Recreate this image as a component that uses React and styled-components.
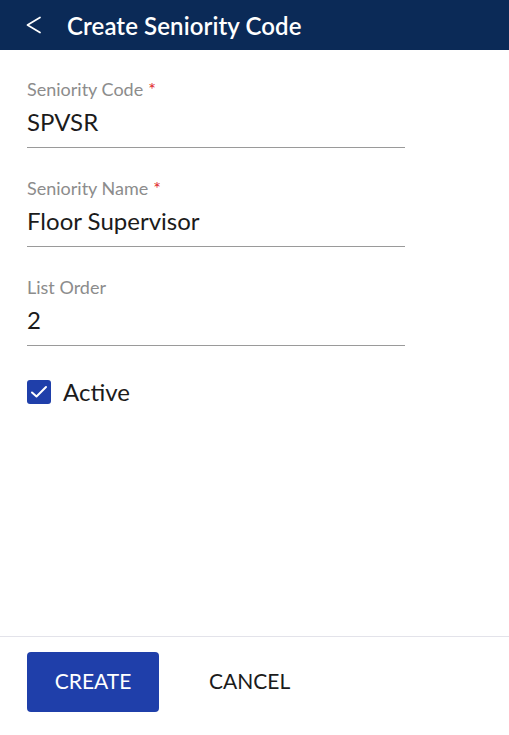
import styled, { createGlobalStyle } from "styled-components";

const GlobalStyle = createGlobalStyle`
  html, body {
    margin: 0;
    padding: 0;
    background: #fff;
  }
  body {
    font-family: Lato, "Open Sans", sans-serif;
    color: #1b1b1b;
  }
`;

const Page = styled.div`
  min-height: 100vh;
  display: flex;
  flex-direction: column;
`;

const Header = styled.header`
  height: 50px;
  background-color: #0b2a57;
  display: flex;
  align-items: center;
  padding-left: 26px;
  gap: 25px;
  color: #fff;
`;

const BackButton = styled.button`
  background: none;
  border: none;
  padding: 0;
  display: flex;
  color: #fff;
  cursor: pointer;
`;

const Title = styled.h1`
  margin: 0;
  font-size: 24px;
  font-weight: 600;
  letter-spacing: 0.1px;
`;

const Form = styled.div`
  flex: 1;
  padding: 28px 27px 0;
  width: 378px;
  display: flex;
  flex-direction: column;
  gap: 29px;
`;

const Field = styled.div`
  display: flex;
  flex-direction: column;
  border-bottom: 1.5px solid #9a9a9a;
`;

const Label = styled.label`
  font-size: 18px;
  color: #8c8c8c;
  line-height: 22px;
`;

const Required = styled.span`
  color: #e0262b;
  margin-left: 5px;
`;

const Value = styled.div`
  font-size: 24px;
  line-height: 30px;
  padding: 7px 0 10px;
  color: #1b1b1b;
`;

const CheckRow = styled.label`
  display: flex;
  align-items: center;
  gap: 12px;
  font-size: 24px;
  line-height: 30px;
  margin-top: 2px;
`;

const Box = styled.span`
  width: 24px;
  height: 24px;
  border-radius: 3px;
  background: #1f3faa;
  display: flex;
  align-items: center;
  justify-content: center;
`;

const Footer = styled.footer`
  border-top: 1px solid #e3e3ea;
  padding: 15px 27px 23px;
  display: flex;
  align-items: center;
  gap: 50px;
`;

const Button = styled.button`
  height: 60px;
  padding: 0 0 3px;
  min-width: ${(p) => (p.$primary ? "132px" : "auto")};
  border: none;
  border-radius: 4px;
  background: ${(p) => (p.$primary ? "#1f3faa" : "transparent")};
  color: ${(p) => (p.$primary ? "#fff" : "#1b1b1b")};
  font-family: Lato, sans-serif;
  font-size: 21px;
  cursor: pointer;
`;

const fields = [
  { label: "Seniority Code", value: "SPVSR", required: true },
  { label: "Seniority Name", value: "Floor Supervisor", required: true },
  { label: "List Order", value: "2" },
];

export default function App() {
  return (
    <Page>
      <GlobalStyle />
      <Header>
        <BackButton aria-label="Back">
          <svg width="16" height="18" viewBox="0 0 16 18" fill="none">
            <path d="M14 1.5 L1.5 9 L14 16.5" stroke="#fff" strokeWidth="1.7" strokeLinecap="round" strokeLinejoin="round" />
          </svg>
        </BackButton>
        <Title>Create Seniority Code</Title>
      </Header>
      <Form>
        {fields.map((f) => (
          <Field key={f.label}>
            <Label>
              {f.label}
              {f.required && <Required>*</Required>}
            </Label>
            <Value>{f.value}</Value>
          </Field>
        ))}
        <CheckRow>
          <Box>
            <svg width="24" height="24" viewBox="0 0 24 24" fill="none">
              <path d="M5 12.5 L9.5 16.5 L19 7" stroke="#fff" strokeWidth="2" strokeLinecap="round" strokeLinejoin="round" />
            </svg>
          </Box>
          Active
        </CheckRow>
      </Form>
      <Footer>
        <Button $primary>CREATE</Button>
        <Button>CANCEL</Button>
      </Footer>
    </Page>
  );
}
